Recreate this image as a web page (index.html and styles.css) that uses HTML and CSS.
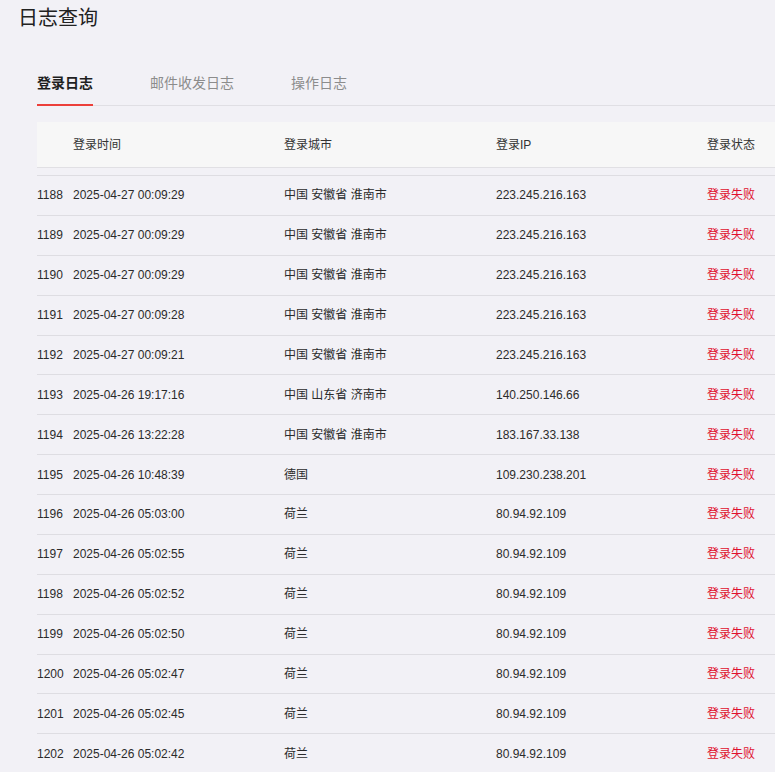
FILE: index.html
```html
<!DOCTYPE html>
<html lang="zh-CN">
<head>
<meta charset="utf-8">
<title>日志查询</title>
<link rel="stylesheet" href="styles.css">
</head>
<body>
<div class="page">
  <h1 class="title">日志查询</h1>
  <div class="content">
    <div class="tabs">
      <div class="tab active">登录日志</div>
      <div class="tab">邮件收发日志</div>
      <div class="tab">操作日志</div>
    </div>
    <div class="table">
      <div class="row head">
        <div class="cell"></div>
        <div class="cell">登录时间</div>
        <div class="cell">登录城市</div>
        <div class="cell">登录IP</div>
        <div class="cell">登录状态</div>
      </div>
      <div class="body">
        <div class="row"><div class="cell">1188</div><div class="cell">2025-04-27 00:09:29</div><div class="cell">中国 安徽省 淮南市</div><div class="cell">223.245.216.163</div><div class="cell fail">登录失败</div></div>
        <div class="row"><div class="cell">1189</div><div class="cell">2025-04-27 00:09:29</div><div class="cell">中国 安徽省 淮南市</div><div class="cell">223.245.216.163</div><div class="cell fail">登录失败</div></div>
        <div class="row"><div class="cell">1190</div><div class="cell">2025-04-27 00:09:29</div><div class="cell">中国 安徽省 淮南市</div><div class="cell">223.245.216.163</div><div class="cell fail">登录失败</div></div>
        <div class="row"><div class="cell">1191</div><div class="cell">2025-04-27 00:09:28</div><div class="cell">中国 安徽省 淮南市</div><div class="cell">223.245.216.163</div><div class="cell fail">登录失败</div></div>
        <div class="row"><div class="cell">1192</div><div class="cell">2025-04-27 00:09:21</div><div class="cell">中国 安徽省 淮南市</div><div class="cell">223.245.216.163</div><div class="cell fail">登录失败</div></div>
        <div class="row"><div class="cell">1193</div><div class="cell">2025-04-26 19:17:16</div><div class="cell">中国 山东省 济南市</div><div class="cell">140.250.146.66</div><div class="cell fail">登录失败</div></div>
        <div class="row"><div class="cell">1194</div><div class="cell">2025-04-26 13:22:28</div><div class="cell">中国 安徽省 淮南市</div><div class="cell">183.167.33.138</div><div class="cell fail">登录失败</div></div>
        <div class="row"><div class="cell">1195</div><div class="cell">2025-04-26 10:48:39</div><div class="cell">德国</div><div class="cell">109.230.238.201</div><div class="cell fail">登录失败</div></div>
        <div class="row"><div class="cell">1196</div><div class="cell">2025-04-26 05:03:00</div><div class="cell">荷兰</div><div class="cell">80.94.92.109</div><div class="cell fail">登录失败</div></div>
        <div class="row"><div class="cell">1197</div><div class="cell">2025-04-26 05:02:55</div><div class="cell">荷兰</div><div class="cell">80.94.92.109</div><div class="cell fail">登录失败</div></div>
        <div class="row"><div class="cell">1198</div><div class="cell">2025-04-26 05:02:52</div><div class="cell">荷兰</div><div class="cell">80.94.92.109</div><div class="cell fail">登录失败</div></div>
        <div class="row"><div class="cell">1199</div><div class="cell">2025-04-26 05:02:50</div><div class="cell">荷兰</div><div class="cell">80.94.92.109</div><div class="cell fail">登录失败</div></div>
        <div class="row"><div class="cell">1200</div><div class="cell">2025-04-26 05:02:47</div><div class="cell">荷兰</div><div class="cell">80.94.92.109</div><div class="cell fail">登录失败</div></div>
        <div class="row"><div class="cell">1201</div><div class="cell">2025-04-26 05:02:45</div><div class="cell">荷兰</div><div class="cell">80.94.92.109</div><div class="cell fail">登录失败</div></div>
        <div class="row"><div class="cell">1202</div><div class="cell">2025-04-26 05:02:42</div><div class="cell">荷兰</div><div class="cell">80.94.92.109</div><div class="cell fail">登录失败</div></div>
      </div>
    </div>
  </div>
</div>
</body>
</html>
```
FILE: styles.css
```css
html, body {
  margin: 0;
  padding: 0;
  overflow: hidden;
  background: #f2f1f6;
}
body {
  font-family: "Liberation Sans", "Noto Sans CJK SC", sans-serif;
  color: #333;
}
.page {
  padding: 4px 0 0 18px;
}
.title {
  margin: 0;
  font-size: 20px;
  line-height: 28px;
  font-weight: normal;
  color: #222;
}
.content {
  padding-left: 19px;
  margin-top: 40px;
}
.tabs {
  display: flex;
  gap: 57px;
  border-bottom: 1px solid #e0dfe4;
}
.tab {
  font-size: 14px;
  line-height: 22px;
  padding-bottom: 10px;
  color: #8c8c8c;
  margin-bottom: -1px;
  border-bottom: 2px solid transparent;
}
.tab.active {
  color: #1f1f1f;
  font-weight: bold;
  border-bottom-color: #ec3f3a;
}
.table {
  margin-top: 16px;
  width: 881px;
  font-size: 12px;
}
.row {
  display: grid;
  grid-template-columns: 36px 211px 212px 211px 211px;
  align-items: center;
  box-sizing: border-box;
  height: 39.88px;
  border-top: 1px solid #dedde2;
  color: #2b2b2b;
}
.cell {
  line-height: 16px;
  height: 16px;
}
.row.head {
  height: 46px;
  border-top: none;
  border-bottom: 1px solid #e1e0e4;
  background: #f7f7f7;
  color: #333;
}
.body {
  margin-top: 7px;
}
.fail {
  color: #e0102e;
}
```
